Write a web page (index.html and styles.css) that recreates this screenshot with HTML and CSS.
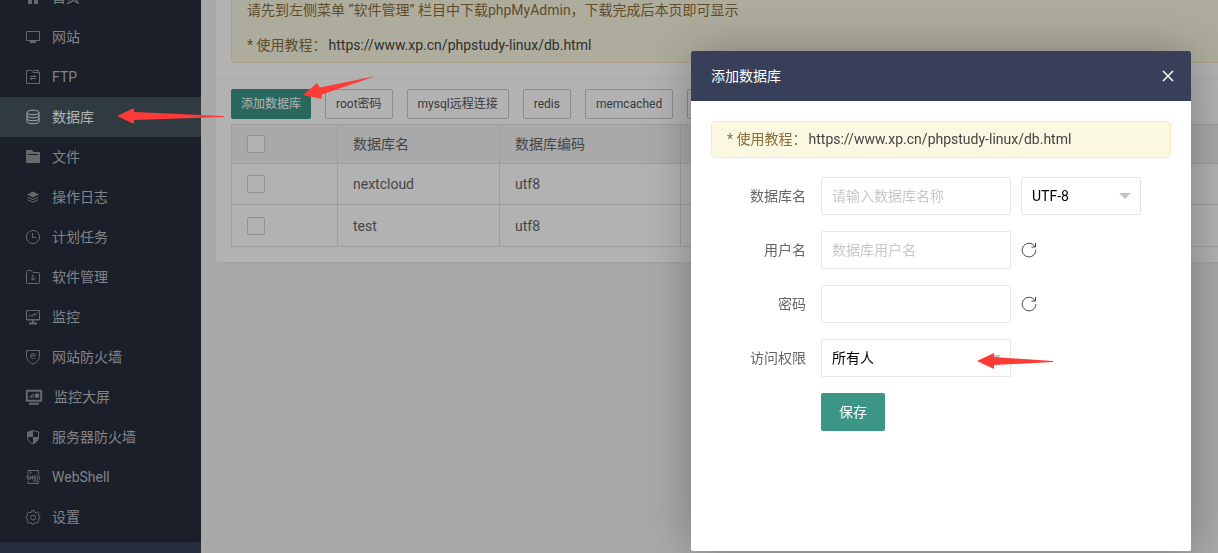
FILE: index.html
```html
<!DOCTYPE html>
<html lang="zh-CN">
<head>
<meta charset="utf-8">
<title>数据库</title>
<link rel="stylesheet" href="styles.css">
</head>
<body>
<div class="app">
  <nav class="sidebar">
    <div class="menu">
      <a class="item" href="#"><svg class="icon" viewBox="0 0 16 16"><path class="fill" d="M8 1 1 7h2v8h4v-5h2v5h4V7h2z"/></svg>首页</a>
      <a class="item" href="#"><svg class="icon" viewBox="0 0 16 16"><path d="M1.500 2.500h13v9h-13z"/><path class="heavy" d="M5 13h6M8 11.500v1"/></svg>网站</a>
      <a class="item" href="#"><svg class="icon" viewBox="0 0 16 16"><path d="M1.500 1.500h5l1.500 2h6.500v11h-13zM8 1.500h5.500v2M5 7.500h6M9.500 6v1.500M5 9.500h6M6.500 9.500v1.500"/></svg>FTP</a>
      <a class="item active" href="#"><svg class="icon" viewBox="0 0 16 16"><ellipse cx="8" cy="3.500" rx="6" ry="2.300"/><path d="M2 3.500v9c0 3 12 3 12 0v-9M2 6.500c0 3 12 3 12 0M2 9.500c0 3 12 3 12 0"/></svg>数据库</a>
      <a class="item" href="#"><svg class="icon" viewBox="0 0 16 16"><path class="fill" fill-rule="evenodd" d="M1 2.500C1 1.700 1.500 1 2.300 1H7l1.500 2H14c.6 0 1 .4 1 1v9c0 .6-.4 1-1 1H2c-.6 0-1-.4-1-1zM3 5v1h10V5z"/></svg>文件</a>
      <a class="item" href="#"><svg class="icon" viewBox="0 0 16 16"><path class="fill" d="m8 2.500 6 3-6 3-6-3z"/><path d="m2.500 8.200 5.500 2.500 5.500-2.500M2.500 10.700l5.500 2.500 5.500-2.500"/></svg>操作日志</a>
      <a class="item" href="#"><svg class="icon" viewBox="0 0 16 16"><circle cx="8" cy="8" r="6.600"/><path d="M7.500 4v4.500H11"/></svg>计划任务</a>
      <a class="item" href="#"><svg class="icon" viewBox="0 0 16 16"><path d="M2.500 1.500H6l2 2h5.500q1 0 1 1v9q0 1-1 1h-11q-1 0-1-1v-11q0-1 1-1zM8 5.500v5.500M5.800 9 8 11.200 10.200 9"/></svg>软件管理</a>
      <a class="item" href="#"><svg class="icon" viewBox="0 0 16 16"><path d="M1.500 1.500h13v9.500h-13zM2 10.500h12"/><path class="heavy" d="M8 11.500v2M4 14.500h8"/><path d="M3.500 7.500 5.500 6l1.500 1.500 2-3 1.200 2 2.300-3"/></svg>监控</a>
      <a class="item" href="#"><svg class="icon" viewBox="0 0 16 16"><path d="M1.500 1.500h13V7c0 4-3 6.500-6.500 8-3.500-1.500-6.500-4-6.500-8zM5.700 6.800h4.600c0-3-4.600-3-4.600 0 0 3 3 3.200 4.300 1.900"/></svg>网站防火墙</a>
      <a class="item" href="#"><svg class="icon wide" viewBox="0 0 18 16"><path class="heavy" d="M1.800 1.800h14.400v10H1.800zM4 14.700h10"/><path d="M4.500 9V7.500M6.500 9V6M8 9V4.500"/><circle class="fill" cx="12" cy="6.700" r="2.400"/></svg>监控大屏</a>
      <a class="item" href="#"><svg class="icon" viewBox="0 0 16 16"><path d="M8 1.500 13.500 3v5c0 3.500-2.500 5.500-5.500 7-3-1.500-5.500-3.500-5.500-7V3z"/><path class="fill" d="M8 1.500V8H2.500V3zM8 8v7c3-1.500 5.500-3.500 5.500-7z"/></svg>服务器防火墙</a>
      <a class="item" href="#"><svg class="icon" viewBox="0 0 16 16"><path d="M3 5.500v-4h10.500v4M3 12v2.500h10.500V12H8M5 2.500l1.500 1L5 4.500M4 6.800H2v1.700h2v1.700H2M5.500 6.500v4M5.500 8.500h2M7.500 6.500v4M11 6.800H9.200v3.400H11M9.200 8.500H11M12.200 6.500v3.700h1M14.200 6.500v3.700H15"/></svg>WebShell</a>
      <a class="item" href="#"><svg class="icon" viewBox="0 0 16 16"><path d="m6.800 1.700h2.400l.4 1.500 1.400.6 1.400-.8 1.600 1.600-.8 1.400.5 1.400 1.200.4v1.400l-1.200.6-.6 1.300.8 1.500-1.600 1.500-1.400-.7-1.300.5-.6 1.300H6.800l-.5-1.300-1.300-.5-1.400.7L2 12.600l.8-1.500-.6-1.300L1 9.200V7.800l1.200-.4.5-1.400L2 4.600 3.600 3l1.400.8 1.400-.6z"/><circle cx="8" cy="8.500" r="2.500"/></svg>设置</a>
    </div>
  </nav>

  <main class="content">
    <section class="card">
      <div class="card-head">
        <div class="note">
          <p class="line">请先到左侧菜单 “软件管理” 栏目中下载phpMyAdmin，下载完成后本页即可显示</p>
          <p class="line">* 使用教程：<a class="link" href="#">https://www.xp.cn/phpstudy-linux/db.html</a></p>
        </div>
      </div>
      <div class="card-body">
        <div class="toolbar">
          <button class="btn primary" type="button">添加数据库</button>
          <button class="btn" type="button">root密码</button>
          <button class="btn" type="button">mysql远程连接</button>
          <button class="btn" type="button">redis</button>
          <button class="btn" type="button">memcached</button>
          <button class="btn" type="button" aria-label="更多"></button>
        </div>
        <table class="table">
          <thead>
            <tr><th class="col-check"><input class="check" type="checkbox" aria-label="全选"></th><th class="col-name">数据库名</th><th class="col-code">数据库编码</th><th></th></tr>
          </thead>
          <tbody>
            <tr><td><input class="check" type="checkbox" aria-label="nextcloud"></td><td>nextcloud</td><td>utf8</td><td></td></tr>
            <tr><td><input class="check" type="checkbox" aria-label="test"></td><td>test</td><td>utf8</td><td></td></tr>
          </tbody>
        </table>
      </div>
    </section>
  </main>
</div>

<div class="overlay">
  <div class="dialog" role="dialog" aria-labelledby="dialog-title">
    <header class="dialog-head">
      <h2 class="dialog-title" id="dialog-title">添加数据库</h2>
      <button class="close" type="button" aria-label="关闭"><svg class="close-icon" viewBox="0 0 12 12"><path d="m1 1 10 10M11 1 1 11"/></svg></button>
    </header>
    <div class="dialog-body">
      <div class="note"><p class="line">* 使用教程：<a class="link" href="#">https://www.xp.cn/phpstudy-linux/db.html</a></p></div>
      <form class="form">
        <div class="row">
          <label class="label" for="db-name">数据库名</label>
          <input class="field" id="db-name" type="text" placeholder="请输入数据库名称">
          <div class="select small"><select class="field" aria-label="编码"><option>UTF-8</option></select></div>
        </div>
        <div class="row">
          <label class="label" for="db-user">用户名</label>
          <input class="field" id="db-user" type="text" placeholder="数据库用户名">
          <button class="refresh" type="button" aria-label="随机用户名"><svg class="refresh-icon" viewBox="0 0 16 16"><path d="M13.900 4.700A6.800 6.800 0 1 0 14.800 8M14.500 1v4H10.500"/></svg></button>
        </div>
        <div class="row">
          <label class="label" for="db-pass">密码</label>
          <input class="field" id="db-pass" type="text">
          <button class="refresh" type="button" aria-label="随机密码"><svg class="refresh-icon" viewBox="0 0 16 16"><path d="M13.900 4.700A6.800 6.800 0 1 0 14.800 8M14.500 1v4H10.500"/></svg></button>
        </div>
        <div class="row">
          <label class="label" for="db-access">访问权限</label>
          <div class="select"><select class="field" id="db-access"><option>所有人</option></select></div>
        </div>
        <div class="row">
          <span class="label"></span>
          <button class="save" type="button">保存</button>
        </div>
      </form>
    </div>
  </div>
</div>

<svg class="arrows" width="1218" height="553" viewBox="0 0 1218 553" aria-hidden="true">
  <path d="M117 116 134 108V112L224 116 V117L134 120V124z"/>
  <path d="M303 95 317 83 320 87.500 376 76 322 94.500 321.500 99z"/>
  <path d="M977 361 994 353V357L1053 361V362L994 365V369z"/>
</svg>
</body>
</html>
```
FILE: styles.css
```css
* { box-sizing: border-box; }

body {
  margin: 0;
  height: 100vh;
  overflow: hidden;
  background: #f2f2f2;
  color: #666;
  font: 14px/20px Roboto, "Noto Sans CJK SC", sans-serif;
}

button, input, select { font: inherit; }
a { color: inherit; text-decoration: none; }

.app { display: flex; height: 100vh; overflow: hidden; }

/* Side menu, scrolled part of the way down */
.sidebar { flex: 0 0 201px; overflow: hidden; background: #3a405b; }
.menu { margin-top: -23px; padding-bottom: 5px; background: #262d3c; border-radius: 0 0 2px 0; }
.item { display: flex; align-items: center; gap: 11px; height: 40px; padding-left: 25px; color: #b9bcc1; }
.item.active { background: #45535e; color: #fff; }

.icon { width: 16px; height: 16px; fill: none; stroke: #94969a; stroke-width: 1; }
.icon.wide { width: 18px; }
.icon .fill { fill: #94969a; stroke: none; }
.icon .heavy { stroke-width: 2; }
.active .icon { stroke: #f4f6f8; }

.content { flex: 1; min-width: 0; padding-left: 15px; }
.card { margin: -8px -20px 0 0; background: #fff; border-radius: 2px; box-shadow: 0 1px 2px rgba(0, 0, 0, .06); }
.card-head { padding: 0 15px 15px; border-bottom: 1px solid #f4f4f4; }
.card-body { padding: 10px 15px 15px; }

.note { padding: 0 15px; background: #faf8e1; border: 1px solid #f5e8c4; border-radius: 4px; color: #8a6d3b; }
.line { margin: 0; line-height: 35px; }
.card .note { padding-top: 1px; border-top: 0; }
.card .line:last-child { line-height: 34px; }
.link { margin-left: 2px; color: #444; }

.toolbar { display: flex; gap: 14px; margin-bottom: 5px; }
.btn { height: 30px; padding: 0 10px; background: #fff; border: 1px solid #c9c9c9; border-radius: 2px; color: #555; font-size: 12px; white-space: nowrap; }
.btn.primary { padding: 0 9px; background: #3c9686; border-color: #3c9686; color: #fff; }
.btn:last-child { width: 80px; }

.table { width: 100%; border-collapse: collapse; table-layout: fixed; }
.table th, .table td { height: 41px; padding: 0 15px; border: 1px solid #e2e2e2; font-weight: 400; text-align: left; }
.table th { height: 39px; background: #f2f2f2; }
.table tbody tr:last-child td { height: 42px; }
.col-check { width: 106px; }
.col-name { width: 162px; }
.col-code { width: 181px; }
.check { display: block; width: 18px; height: 18px; margin: 0; appearance: none; background: #fff; border: 1px solid #d2d2d2; border-radius: 2px; }

.overlay { position: fixed; inset: 0; display: flex; justify-content: flex-end; align-items: flex-start; padding: 51px 27px 0; background: rgba(0, 0, 0, .3); }
.dialog { width: 500px; min-height: 500px; background: #fff; border-radius: 2px; box-shadow: 1px 1px 50px rgba(0, 0, 0, .3); }
.dialog-head { display: flex; align-items: center; justify-content: space-between; height: 50px; padding: 0 17px 0 20px; background: #373f59; border-radius: 2px 2px 0 0; color: #fff; }
.dialog-title { margin: 0; font-size: 14px; font-weight: 400; }
.close { display: flex; padding: 0; background: none; border: 0; }
.close-icon { width: 12px; height: 12px; fill: none; stroke: #fff; stroke-width: 1.5; }
.dialog-body { padding: 20px; }

.form { display: flex; flex-direction: column; gap: 16px; margin-top: 19px; }
.row { display: flex; align-items: center; gap: 10px; height: 38px; }
.label { width: 95px; margin-right: 5px; text-align: right; }
.field { width: 190px; height: 38px; padding: 0 10px; appearance: none; background: #fff; border: 1px solid #e6e6e6; border-radius: 2px; color: #000; outline: 0; }
.field::placeholder { color: #c8c8c8; opacity: 1; }
.select { position: relative; width: 190px; }
.select.small { width: 120px; }
.select .field { width: 100%; }
.select::after { content: ""; position: absolute; top: 16px; right: 10px; border: 6px solid transparent; border-top-color: #c2c2c2; border-bottom: 0; pointer-events: none; }
.refresh { display: flex; padding: 0; background: none; border: 0; }
.refresh-icon { width: 16px; height: 16px; fill: none; stroke: #444; stroke-width: 1; }
.save { height: 38px; padding: 0 18px; background: #3c9686; border: 0; border-radius: 2px; color: #fff; }

/* Red pointer marks drawn over everything else */
.arrows { position: fixed; top: 0; left: 0; fill: #ff3b38; pointer-events: none; }
```
